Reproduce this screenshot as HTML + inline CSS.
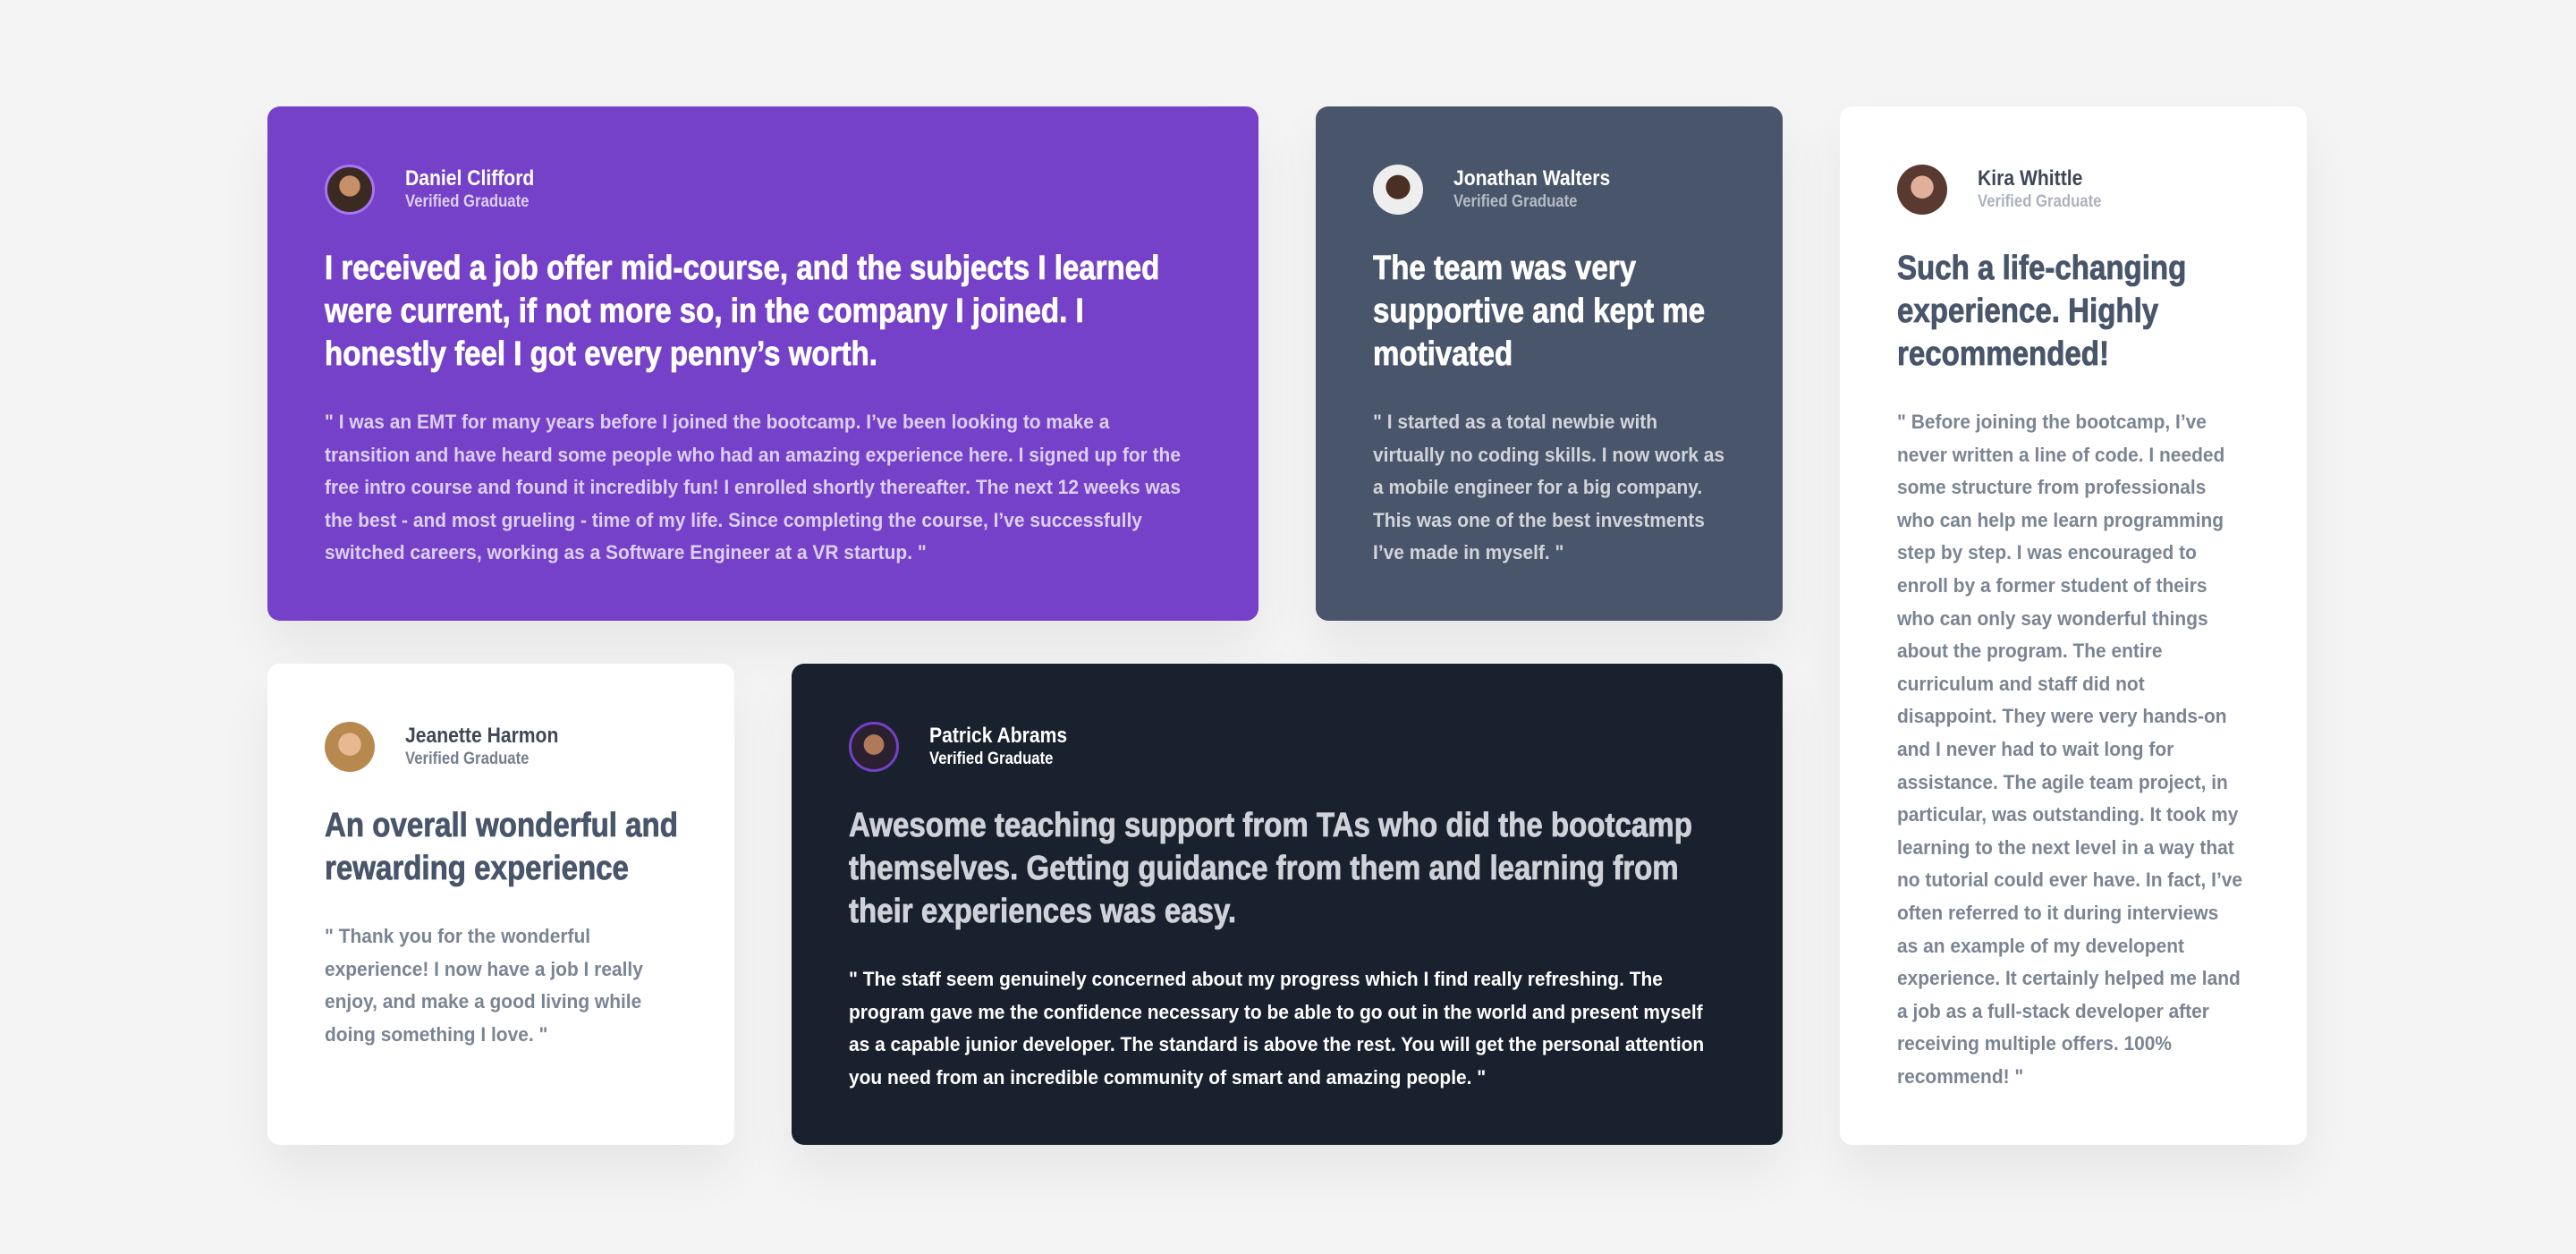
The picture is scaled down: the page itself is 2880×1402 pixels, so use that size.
<!DOCTYPE html>
<html><head><meta charset="utf-8"><style>
*{margin:0;padding:0;box-sizing:border-box}
body{width:2880px;height:1402px;background:#f4f4f4;font-family:"Liberation Sans Narrow","Liberation Sans",sans-serif;position:relative;overflow:hidden}
.card{position:absolute;border-radius:14px;padding:64px 64px;box-shadow:0 30px 60px rgba(0,0,0,0.06);overflow:hidden}
.hd{display:flex;align-items:center;height:58px}
.av{width:56px;height:56px;border-radius:50%;margin-right:34px;flex:none;background:radial-gradient(circle at 50% 42%,#c8906a 0 30%,#3a2a22 31% 100%)}
.nmw{transform:scaleX(0.88);transform-origin:left center}
.nm{font-size:24px;font-weight:bold;line-height:28px}
.vg{font-size:19px;font-weight:bold;line-height:24px;opacity:.6}
h2{font-size:38px;line-height:48px;margin-top:35px;white-space:nowrap;font-weight:bold;-webkit-text-stroke:0.8px currentColor;transform:scaleX(0.87);transform-origin:left top}
p{font-size:22.5px;line-height:36.6px;margin-top:34px;white-space:nowrap;font-weight:bold;opacity:.75;transform:scaleX(0.93);transform-origin:left top}
.purple{background:#7541c8;color:#fff}
.slate{background:#48556a;color:#fff}
.dark{background:#19212e;color:#fff}
.dark h2{color:#cfd2d8}
.white{background:#fff;color:#48556a}
.white .nm{color:#3d4758}
.white .vg{opacity:.45}
.white p{opacity:.72}
</style></head><body>

<div class="card purple" style="left:299px;top:119px;width:1108px;height:575px">
<div class="hd"><div class="av" style="border:3px solid #a775f1"></div><div class="nmw"><div class="nm">Daniel Clifford</div><div class="vg" style="opacity:.75">Verified Graduate</div></div></div>
<h2>I received a job offer mid-course, and the subjects I learned<br>were current, if not more so, in the company I joined. I<br>honestly feel I got every penny’s worth.</h2>
<p>" I was an EMT for many years before I joined the bootcamp. I’ve been looking to make a<br>transition and have heard some people who had an amazing experience here. I signed up for the<br>free intro course and found it incredibly fun! I enrolled shortly thereafter. The next 12 weeks was<br>the best - and most grueling - time of my life. Since completing the course, I’ve successfully<br>switched careers, working as a Software Engineer at a VR startup. "</p>
</div>

<div class="card slate" style="left:1471px;top:119px;width:522px;height:575px">
<div class="hd"><div class="av" style="background:radial-gradient(circle at 50% 45%,#4a3024 0 32%,#eee 33% 100%)"></div><div class="nmw"><div class="nm">Jonathan Walters</div><div class="vg">Verified Graduate</div></div></div>
<h2>The team was very<br>supportive and kept me<br>motivated</h2>
<p>" I started as a total newbie with<br>virtually no coding skills. I now work as<br>a mobile engineer for a big company.<br>This was one of the best investments<br>I’ve made in myself. "</p>
</div>

<div class="card white" style="left:2057px;top:119px;width:522px;height:1161px">
<div class="hd"><div class="av" style="background:radial-gradient(circle at 50% 45%,#e0b09a 0 30%,#5a3a30 31% 100%)"></div><div class="nmw"><div class="nm">Kira Whittle</div><div class="vg">Verified Graduate</div></div></div>
<h2>Such a life-changing<br>experience. Highly<br>recommended!</h2>
<p>" Before joining the bootcamp, I’ve<br>never written a line of code. I needed<br>some structure from professionals<br>who can help me learn programming<br>step by step. I was encouraged to<br>enroll by a former student of theirs<br>who can only say wonderful things<br>about the program. The entire<br>curriculum and staff did not<br>disappoint. They were very hands-on<br>and I never had to wait long for<br>assistance. The agile team project, in<br>particular, was outstanding. It took my<br>learning to the next level in a way that<br>no tutorial could ever have. In fact, I’ve<br>often referred to it during interviews<br>as an example of my developent<br>experience. It certainly helped me land<br>a job as a full-stack developer after<br>receiving multiple offers. 100%<br>recommend! "</p>
</div>

<div class="card white" style="left:299px;top:742px;width:522px;height:538px">
<div class="hd"><div class="av" style="background:radial-gradient(circle at 50% 45%,#e8b890 0 30%,#b8894f 31% 100%)"></div><div class="nmw"><div class="nm">Jeanette Harmon</div><div class="vg" style="opacity:.75">Verified Graduate</div></div></div>
<h2>An overall wonderful and<br>rewarding experience</h2>
<p>" Thank you for the wonderful<br>experience! I now have a job I really<br>enjoy, and make a good living while<br>doing something I love. "</p>
</div>

<div class="card dark" style="left:885px;top:742px;width:1108px;height:538px">
<div class="hd"><div class="av" style="border:3px solid #7541c8;background:radial-gradient(circle at 50% 45%,#b07a5a 0 30%,#2a2030 31% 100%)"></div><div class="nmw"><div class="nm">Patrick Abrams</div><div class="vg" style="opacity:1">Verified Graduate</div></div></div>
<h2>Awesome teaching support from TAs who did the bootcamp<br>themselves. Getting guidance from them and learning from<br>their experiences was easy.</h2>
<p style="opacity:1">" The staff seem genuinely concerned about my progress which I find really refreshing. The<br>program gave me the confidence necessary to be able to go out in the world and present myself<br>as a capable junior developer. The standard is above the rest. You will get the personal attention<br>you need from an incredible community of smart and amazing people. "</p>
</div>

</body></html>
